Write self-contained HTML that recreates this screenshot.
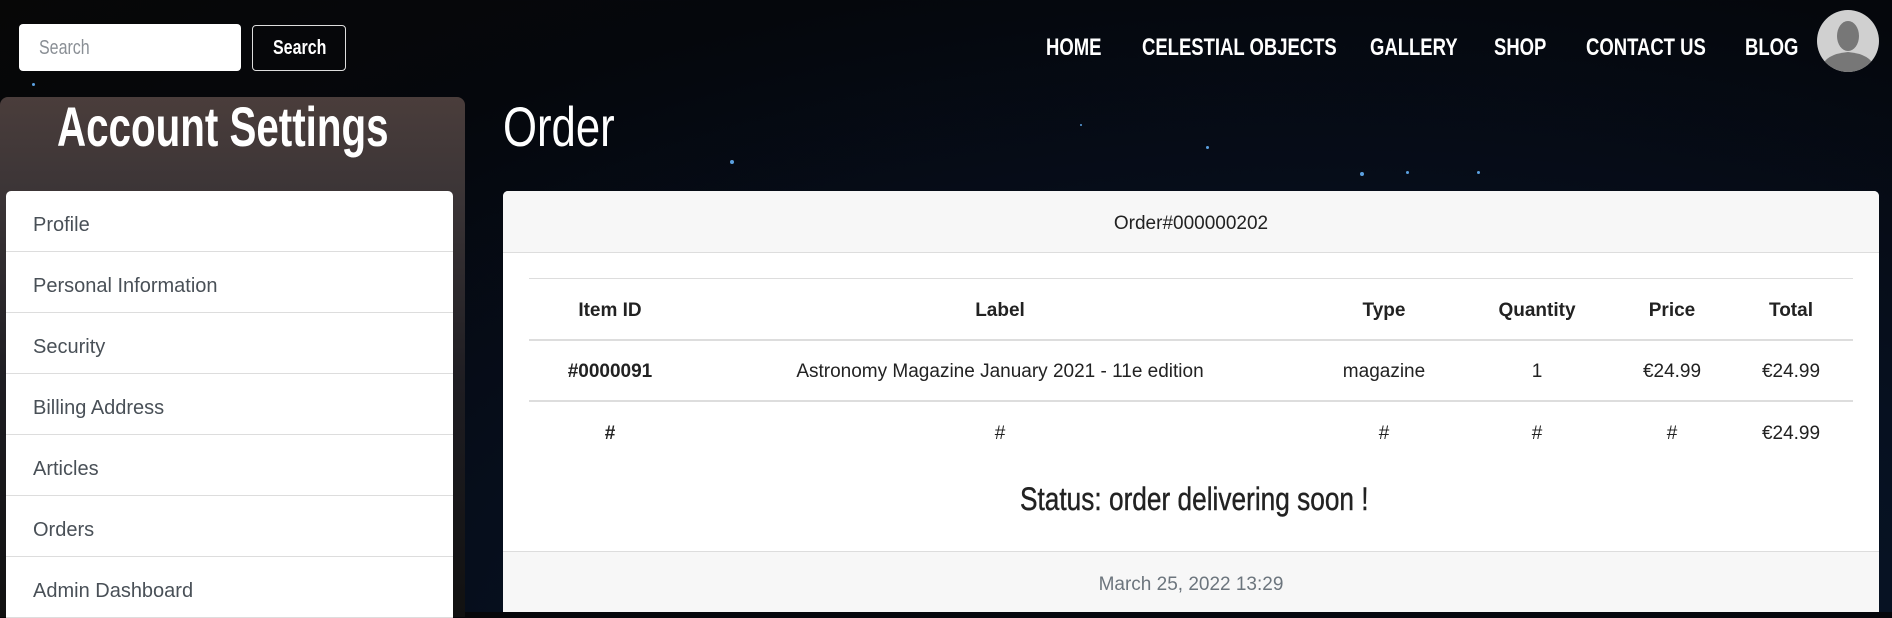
<!DOCTYPE html>
<html><head><meta charset="utf-8"><style>
*{box-sizing:border-box;margin:0;padding:0}
body{width:1892px;height:612px;overflow:hidden;position:relative;font-family:"Liberation Sans",sans-serif;
background:radial-gradient(ellipse at 70% 110%,#0a1a2e 0%,#061020 40%,#05070c 75%,#070707 100%);}
.c{display:inline-block;transform-origin:0 50%;white-space:nowrap}
.star{position:absolute;border-radius:50%;background:#5aa0e0}
.inp{position:absolute;left:19px;top:24px;width:222px;height:47px;background:#fff;border-radius:4px;color:#8a8f95;font-size:20px;padding:13px 0 0 20px}
.btn{position:absolute;left:252px;top:25px;width:94px;height:46px;border:1px solid #ddd;border-radius:4px;color:#fff;font-size:20px;line-height:44px;font-weight:bold;padding-left:20px}
.nav{position:absolute;top:34px;font-size:24px;color:#fff;font-weight:bold}
.nav .c{transform:scaleX(0.77)}
.side{position:absolute;left:0;top:97px;width:465px;height:520px;border-radius:8px 8px 0 0;background:linear-gradient(#4a3d3b 0%,#3a3436 20%,#1e1d22 55%,#111 100%)}
.side h1{position:absolute;left:57px;top:-3px;color:#fff;font-size:56px;font-weight:bold}
.list{position:absolute;left:6px;top:191px;width:447px;background:#fff;border-radius:5px 5px 0 0;overflow:hidden}
.list div{height:61px;border-bottom:1px solid #ddd;color:#495057;font-size:20px;padding:23px 0 0 27px}
.title{position:absolute;left:503px;top:94px;color:#fff;font-size:56px}
.card{position:absolute;left:503px;top:191px;width:1376px;height:421px;background:#fff;border-radius:5px 5px 0 0;overflow:hidden}
.ch{height:62px;background:#f7f7f7;border-bottom:1px solid #ddd;text-align:center;font-size:19px;color:#222;line-height:66px}
table{position:absolute;left:26px;top:87px;width:1324px;border-collapse:collapse;font-size:19px;color:#222;table-layout:fixed}
td,th{text-align:center;height:61px;padding-top:4px}
tr.h{border-top:1px solid #ddd;border-bottom:2px solid #ddd}
tr.r{border-bottom:2px solid #ddd}
.st{position:absolute;left:517px;top:290px;font-size:32px;color:#222;-webkit-text-stroke:0.4px #222}
.cf{position:absolute;left:0;bottom:0;width:100%;height:61px;background:#f7f7f7;border-top:1px solid #ddd;text-align:center;font-size:19px;color:#6c757d;line-height:66px}
.av{position:absolute;left:1817px;top:10px;width:62px;height:62px;border-radius:50%;background:#d0d0d0;overflow:hidden}
</style></head><body>
<div class="star" style="left:730px;top:160px;width:4px;height:4px"></div>
<div class="star" style="left:1360px;top:172px;width:4px;height:4px"></div>
<div class="star" style="left:1406px;top:171px;width:3px;height:3px"></div>
<div class="star" style="left:1477px;top:171px;width:3px;height:3px"></div>
<div class="star" style="left:1206px;top:146px;width:3px;height:3px"></div>
<div class="star" style="left:32px;top:83px;width:3px;height:3px"></div>
<div class="star" style="left:1080px;top:124px;width:2px;height:2px"></div>
<div class="inp"><span class="c" style="transform:scaleX(0.8)">Search</span></div>
<div class="btn"><span class="c" style="transform:scaleX(0.8)">Search</span></div>
<div class="nav" style="left:1046px"><span class="c">HOME</span></div>
<div class="nav" style="left:1142px"><span class="c">CELESTIAL OBJECTS</span></div>
<div class="nav" style="left:1370px"><span class="c">GALLERY</span></div>
<div class="nav" style="left:1494px"><span class="c">SHOP</span></div>
<div class="nav" style="left:1586px"><span class="c">CONTACT US</span></div>
<div class="nav" style="left:1745px"><span class="c">BLOG</span></div>
<div class="av"><svg width="62" height="62"><ellipse cx="31" cy="26" rx="11" ry="15" fill="#777"/><path d="M4 58 Q8 44 31 42 Q54 44 58 58 L58 62 L4 62Z" fill="#777"/></svg></div>
<div class="side"><h1><span class="c" style="transform:scaleX(0.72)">Account Settings</span></h1></div>
<div class="list"><div>Profile</div><div>Personal Information</div><div>Security</div><div>Billing Address</div><div>Articles</div><div>Orders</div><div>Admin Dashboard</div></div>
<div class="title"><span class="c" style="transform:scaleX(0.78)">Order</span></div>
<div class="card">
<div class="ch">Order#000000202</div>
<table>
<colgroup><col style="width:162px"><col style="width:618px"><col style="width:150px"><col style="width:156px"><col style="width:114px"><col></colgroup>
<tr class="h"><th>Item ID</th><th>Label</th><th>Type</th><th>Quantity</th><th>Price</th><th>Total</th></tr>
<tr class="r"><td><b>#0000091</b></td><td>Astronomy Magazine January 2021 - 11e edition</td><td>magazine</td><td>1</td><td>€24.99</td><td>€24.99</td></tr>
<tr><td><b>#</b></td><td>#</td><td>#</td><td>#</td><td>#</td><td>€24.99</td></tr>
</table>
<div class="st"><span class="c" style="transform:scaleX(0.82)">Status: order delivering soon !</span></div>
<div class="cf">March 25, 2022 13:29</div>
</div>
</body></html>
